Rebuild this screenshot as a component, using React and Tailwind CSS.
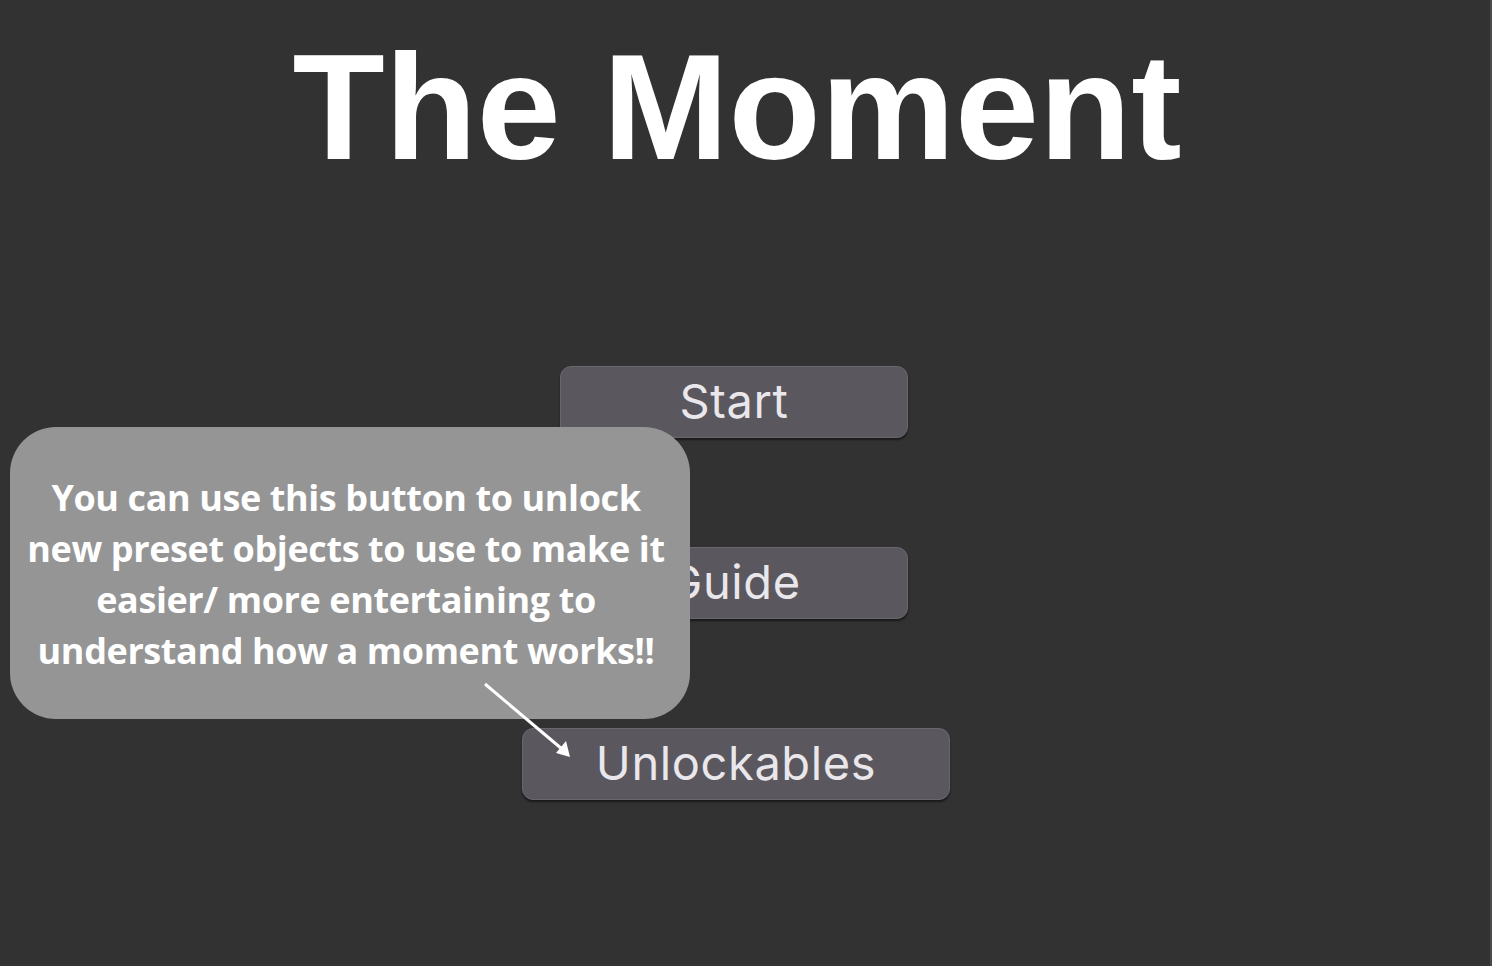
import React from "react";

const menuButtons = [
  { label: "Start", width: "w-[348px]" },
  { label: "Guide", width: "w-[348px]" },
  { label: "Unlockables", width: "w-[428px] ml-[4px]" },
];

function MenuButton({ label, width }) {
  return (
    <button
      className={`${width} h-[72px] rounded-[11px] bg-[#5a575e] border border-[#69666d] shadow-[0_2px_2px_rgba(0,0,0,0.5)] text-[#e9e7eb] text-[47px] leading-none tracking-[0.6px] pb-[3px] flex items-center justify-center`}
      style={{ fontFamily: "Inter, 'Noto Sans', sans-serif" }}
    >
      {label}
    </button>
  );
}

export default function App() {
  return (
    <div className="relative min-h-[966px] w-full bg-[#323232] overflow-hidden">
      {/* thin edge on the right */}
      <div className="absolute right-0 top-0 h-full w-[2px] bg-[#4a4a4a]" />

      <div className="w-[1468px] flex flex-col items-center pt-[31px]">
        <h1
          className="text-white font-bold text-[151px] leading-none pl-[6px]"
          style={{ fontFamily: "'Liberation Sans', Arial, sans-serif" }}
        >
          The Moment
        </h1>

        <div className="mt-[184px] flex flex-col items-center gap-[109px]">
          {menuButtons.map((b) => (
            <MenuButton key={b.label} label={b.label} width={b.width} />
          ))}
        </div>
      </div>

      {/* help bubble */}
      <div className="absolute left-[10px] top-[427px] w-[680px] h-[292px] rounded-[46px] bg-[#959595] pt-[45px]">
        <p
          className="text-white font-bold text-[36px] leading-[51px] text-center tracking-[-0.4px] pr-[8px]"
          style={{ fontFamily: "'Open Sans', 'Noto Sans', sans-serif" }}
        >
          You can use this button to unlock
          <br />
          new preset objects to use to make it
          <br />
          easier/ more entertaining to
          <br />
          understand how a moment works!!
        </p>
      </div>

      {/* arrow */}
      <svg
        className="absolute left-0 top-0 pointer-events-none"
        width="1492"
        height="966"
      >
        <line x1="485" y1="684" x2="562" y2="749" stroke="white" strokeWidth="3" />
        <polygon points="570,757 556,753 566,741" fill="white" />
      </svg>
    </div>
  );
}
